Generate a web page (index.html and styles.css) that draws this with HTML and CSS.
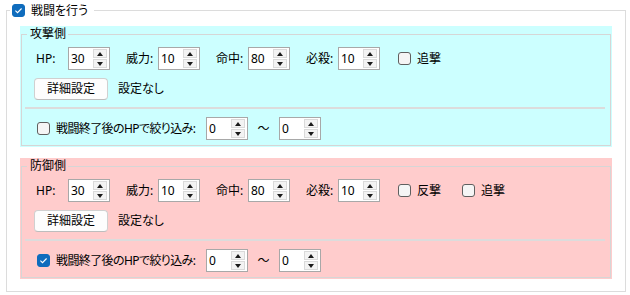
FILE: index.html
```html
<!DOCTYPE html>
<html lang="ja">
<head>
<meta charset="utf-8">
<title>戦闘設定</title>
<link rel="stylesheet" href="styles.css">
</head>
<body>
<fieldset class="outer">
  <legend class="outer-legend">
    <span class="cb on"><svg viewBox="0 0 13 13" width="13" height="13"><path d="M3.4 6.7 L5.5 8.7 L9.6 4.5" fill="none" stroke="#fff" stroke-width="1.1"/></svg></span>
    <span>戦闘を行う</span>
  </legend>
  <div class="outer-body">
    <div class="panel cyan">
      <fieldset class="group">
        <legend>攻撃側</legend>
        <div class="row stats">
          <div class="stat"><span class="lbl">HP:</span><span class="spin"><span class="val">30</span><span class="arrows"><span class="arr up"></span><span class="arr down"></span></span></span></div>
          <div class="stat"><span class="lbl">威力:</span><span class="spin"><span class="val">10</span><span class="arrows"><span class="arr up"></span><span class="arr down"></span></span></span></div>
          <div class="stat"><span class="lbl">命中:</span><span class="spin"><span class="val">80</span><span class="arrows"><span class="arr up"></span><span class="arr down"></span></span></span></div>
          <div class="stat"><span class="lbl">必殺:</span><span class="spin"><span class="val">10</span><span class="arrows"><span class="arr up"></span><span class="arr down"></span></span></span></div>
          <div class="checks">
            <label class="check"><span class="cb"></span><span>追撃</span></label>
          </div>
        </div>
        <div class="row detail">
          <button class="btn" type="button">詳細設定</button>
          <span>設定なし</span>
        </div>
        <div class="sep"></div>
        <div class="row filter">
          <label class="check wide"><span class="cb"></span><span class="tight">戦闘終了後のHPで絞り込み:</span></label>
          <span class="spin"><span class="val">0</span><span class="arrows"><span class="arr up"></span><span class="arr down"></span></span></span>
          <span class="tilde">〜</span>
          <span class="spin"><span class="val">0</span><span class="arrows"><span class="arr up"></span><span class="arr down"></span></span></span>
        </div>
      </fieldset>
    </div>
    <div class="panel pink">
      <fieldset class="group">
        <legend>防御側</legend>
        <div class="row stats">
          <div class="stat"><span class="lbl">HP:</span><span class="spin"><span class="val">30</span><span class="arrows"><span class="arr up"></span><span class="arr down"></span></span></span></div>
          <div class="stat"><span class="lbl">威力:</span><span class="spin"><span class="val">10</span><span class="arrows"><span class="arr up"></span><span class="arr down"></span></span></span></div>
          <div class="stat"><span class="lbl">命中:</span><span class="spin"><span class="val">80</span><span class="arrows"><span class="arr up"></span><span class="arr down"></span></span></span></div>
          <div class="stat"><span class="lbl">必殺:</span><span class="spin"><span class="val">10</span><span class="arrows"><span class="arr up"></span><span class="arr down"></span></span></span></div>
          <div class="checks">
            <label class="check"><span class="cb"></span><span>反撃</span></label>
            <label class="check"><span class="cb"></span><span>追撃</span></label>
          </div>
        </div>
        <div class="row detail">
          <button class="btn" type="button">詳細設定</button>
          <span>設定なし</span>
        </div>
        <div class="sep"></div>
        <div class="row filter">
          <label class="check wide"><span class="cb on"><svg viewBox="0 0 13 13" width="13" height="13"><path d="M3.4 6.7 L5.5 8.7 L9.6 4.5" fill="none" stroke="#fff" stroke-width="1.1"/></svg></span><span class="tight">戦闘終了後のHPで絞り込み:</span></label>
          <span class="spin"><span class="val">0</span><span class="arrows"><span class="arr up"></span><span class="arr down"></span></span></span>
          <span class="tilde">〜</span>
          <span class="spin"><span class="val">0</span><span class="arrows"><span class="arr up"></span><span class="arr down"></span></span></span>
        </div>
      </fieldset>
    </div>
  </div>
</fieldset>
</body>
</html>
```
FILE: styles.css
```css
* { box-sizing: border-box; }
html, body { margin: 0; padding: 0; background: #fff; }
body {
  width: 630px;
  height: 295px;
  overflow: hidden;
  font-family: "Noto Sans", "Noto Sans CJK JP", sans-serif;
  font-feature-settings: "palt";
  font-size: 12px;
  line-height: 16px;
  color: #000;
}

.outer {
  margin: 2px 4px 0 6px;
  padding: 7px 13px 12px 13px;
  border: 1px solid #dcdcdc;
  min-width: 0;
}
.outer-legend {
  display: flex;
  align-items: center;
  gap: 6px;
  height: 17px;
  margin-left: -10px;
  padding: 0 6px 0 2px;
}
.outer-body {
  display: flex;
  flex-direction: column;
  gap: 11px;
}

.panel { padding: 0 1px 1px 1px; }
.cyan { background: #ccffff; }
.pink { background: #ffcccc; }

.group {
  margin: 0;
  min-width: 0;
  border: 1px solid #d6d6d6;
  padding: 5px 12px 5px 12px;
}
.group > legend {
  height: 16px;
  line-height: 16px;
  margin-left: -7px;
  padding: 0 2px 0 3px;
}

.row { display: flex; align-items: center; }
.stats { height: 23px; gap: 14px; }
.detail { height: 22px; margin-top: 8px; gap: 10px; }
.sep { height: 2px; background: #dcdcdc; margin: 7px -7px 8px -9px; }
.filter { height: 23px; }

.stat { display: flex; align-items: center; }
.lbl { width: 34px; padding-left: 2px; }

.spin {
  display: flex;
  width: 42px;
  height: 23px;
  border: 1px solid #a8a8a8;
  background: #fff;
  padding: 1px 2px 1px 1px;
  flex: none;
}
.val { flex: 1; line-height: 19px; padding-left: 1px; }
.arrows {
  display: flex;
  flex-direction: column;
  gap: 1px;
  width: 14px;
}
.arr {
  height: 9px;
  border: 1px solid #dadada;
  background: #f3f3f3;
  display: flex;
  align-items: center;
  justify-content: center;
}
.arr::before {
  content: "";
  border-left: 3px solid transparent;
  border-right: 3px solid transparent;
}
.up::before { border-bottom: 4px solid #1a1a1a; }
.down::before { border-top: 4px solid #1a1a1a; }

.checks { display: flex; gap: 18px; margin-left: 1px; }
.check {
  display: flex;
  align-items: center;
  gap: 6px;
  padding-left: 3px;
}
.check.wide { width: 172px; }
.tight { letter-spacing: -0.6px; }

.cb {
  display: block;
  width: 13px;
  height: 13px;
  flex: none;
  border: 1px solid #5f5f5f;
  border-radius: 3px;
  background: #f5f5f5;
}
.cb.on {
  background: #0f6cbd;
  border-color: #0f6cbd;
}
.cb.on svg { display: block; margin: -1px; }

.btn {
  width: 74px;
  height: 22px;
  padding: 0;
  font: inherit;
  color: #000;
  background: #fdfdfd;
  border: 1px solid #d0d0d0;
  border-bottom-color: #bdbdbd;
  border-radius: 4px;
}

.tilde { width: 31px; text-align: center; }
```
